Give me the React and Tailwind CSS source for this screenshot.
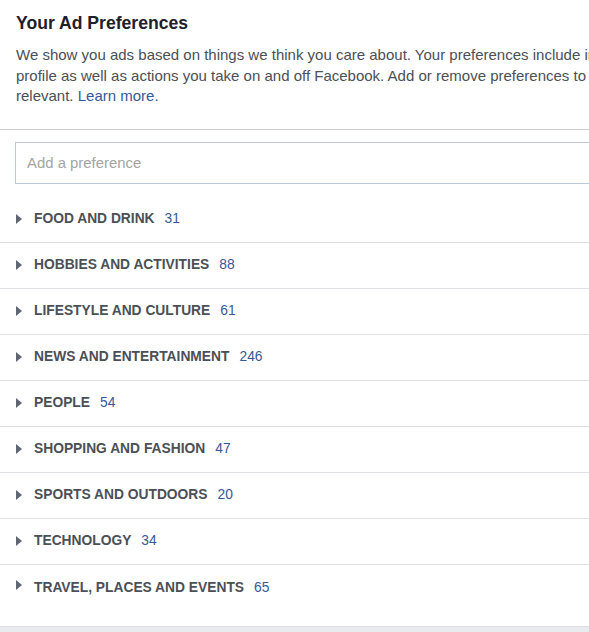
export default function App() {
  const categories = [
    ['FOOD AND DRINK', 31],
    ['HOBBIES AND ACTIVITIES', 88],
    ['LIFESTYLE AND CULTURE', 61],
    ['NEWS AND ENTERTAINMENT', 246],
    ['PEOPLE', 54],
    ['SHOPPING AND FASHION', 47],
    ['SPORTS AND OUTDOORS', 20],
    ['TECHNOLOGY', 34],
    ['TRAVEL, PLACES AND EVENTS', 65],
  ];

  return (
    <div className="w-[589px] h-[632px] overflow-hidden bg-[#e9eaed] font-['Liberation_Sans',Arial,sans-serif]">
      <div className="w-[660px] bg-white">
        {/* header */}
        <div className="px-4 pt-[12px] pb-[22px] border-b border-[#cccccc]">
          <h2 className="text-[17.6px] leading-[22px] font-bold text-[#1d2129]">Your Ad Preferences</h2>
          <p className="mt-[11px] text-[15px] leading-[20.5px] text-[#4b4f56] whitespace-nowrap">
            We show you ads based on things we think you care about. Your preferences include interests from your
            <br />
            profile as well as actions you take on and off Facebook. Add or remove preferences to make your ads more
            <br />
            relevant. <a href="#" className="text-[#365899]">Learn more.</a>
          </p>
        </div>

        {/* search */}
        <div className="pl-[15px] pt-[12px] pb-[13px]">
          <input
            type="text"
            placeholder="Add a preference"
            className="w-[620px] h-[42px] px-[11px] border border-[#bdc7d8] text-[14.9px] text-[#1d2129] placeholder:text-[#a4a4a4] outline-none"
          />
        </div>

        {/* categories */}
        <ul>
          {categories.map(([name, count], i) => (
            <li
              key={name}
              className={
                i === categories.length - 1
                  ? 'flex items-start pt-[15px] h-[62px] border-b border-[#dddfe2]'
                  : 'flex items-center h-[46px] border-b border-[#dddfe2]'
              }
            >
              <span className="ml-[16px] mr-[12px] w-0 h-0 border-y-[5.5px] border-y-transparent border-l-[6px] border-l-[#606773]"></span>
              <span className="text-[13.8px] leading-[16px] font-bold text-[#4b4f56]">{name}</span>
              <span className="ml-[10px] text-[13.8px] leading-[16px] text-[#365899]">{count}</span>
            </li>
          ))}
        </ul>
      </div>
    </div>
  );
}
